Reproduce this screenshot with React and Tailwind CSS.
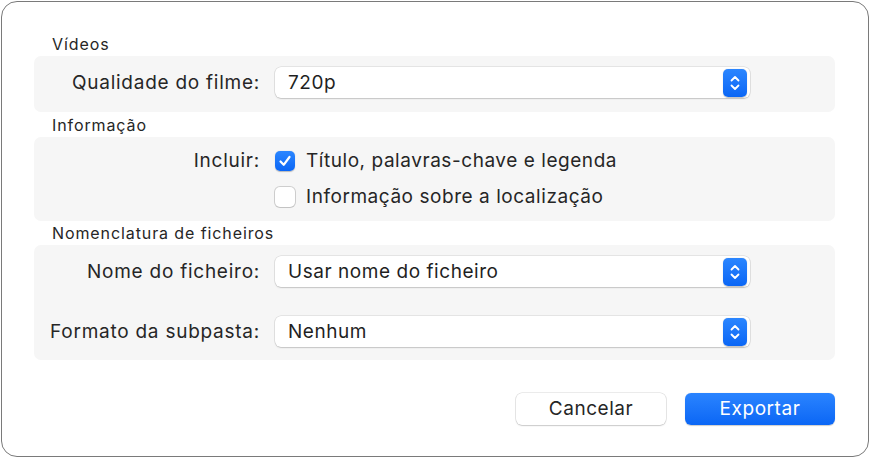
import React, { useState } from 'react';

const Stepper = () => (
  <span className="flex h-[28px] w-[24px] items-center justify-center rounded-[5px] bg-gradient-to-b from-[#2b86ff] to-[#0a66f5] shadow-[0_0.5px_1px_rgba(0,0,0,0.25)]">
    <svg width="12" height="20" viewBox="0 0 12 20" fill="none">
      <path d="M2.5 7.5 L6 4 L9.5 7.5" stroke="white" strokeWidth="1.8" strokeLinecap="round" strokeLinejoin="round" />
      <path d="M2.5 12.5 L6 16 L9.5 12.5" stroke="white" strokeWidth="1.8" strokeLinecap="round" strokeLinejoin="round" />
    </svg>
  </span>
);

const Select = ({ value }) => (
  <div className="flex h-[31px] w-[475px] items-center justify-between rounded-[6px] bg-white pl-[13px] pr-[3px] shadow-[0_0_0_0.5px_rgba(0,0,0,0.14),0_1px_1.5px_rgba(0,0,0,0.14)]">
    <span className="text-[19px] tracking-[0.55px] text-[#1f1f1f]">{value}</span>
    <Stepper />
  </div>
);

const Checkbox = ({ checked, onClick }) =>
  checked ? (
    <button
      onClick={onClick}
      className="flex h-[20px] w-[20px] items-center justify-center rounded-[5px] bg-gradient-to-b from-[#2b86ff] to-[#0a66f5] shadow-[0_0.5px_1px_rgba(0,0,0,0.25)]">
      <svg width="14" height="14" viewBox="0 0 14 14" fill="none">
        <path d="M2.5 7.5 L5.7 10.8 L11.5 3" stroke="white" strokeWidth="2.2" strokeLinecap="round" strokeLinejoin="round" />
      </svg>
    </button>
  ) : (
    <button
      onClick={onClick}
      className="h-[20px] w-[20px] rounded-[5px] bg-white shadow-[0_0_0_1px_rgba(0,0,0,0.16),0_1px_1px_rgba(0,0,0,0.06)]"
    />
  );

const Row = ({ label, children }) => (
  <div className="flex items-center leading-[24px]">
    <div className="w-[226px] text-right text-[19px] tracking-[0.75px] text-[#262626]">{label}</div>
    <div className="ml-[15px]">{children}</div>
  </div>
);

const SectionTitle = ({ children }) => (
  <div className="h-[24px] pl-[18px] text-[16px] leading-[24px] tracking-[0.9px] text-[#262626]">{children}</div>
);

const App = () => {
  const [titulo, setTitulo] = useState(true);
  const [local, setLocal] = useState(false);

  return (
    <div className="h-[458px] w-[870px] bg-white p-[1px] font-['Inter',sans-serif]">
      <div className="h-[456px] w-[868px] rounded-[16px] border-[1.5px] border-[#7a7a7a] bg-white px-[32px] pt-[30px]">
        <SectionTitle>Vídeos</SectionTitle>
        <div className="h-[56px] w-[801px] rounded-[7px] bg-[#f6f6f6] pt-[11px]">
          <Row label="Qualidade do filme:">
            <Select value="720p" />
          </Row>
        </div>

        <div className="pt-[1px]">
          <SectionTitle>Informação</SectionTitle>
        </div>
        <div className="flex h-[84px] w-[801px] flex-col gap-[12px] rounded-[7px] bg-[#f6f6f6] pt-[12px]">
          <Row label="Incluir:">
            <div className="flex items-center gap-[11px]">
              <Checkbox checked={titulo} onClick={() => setTitulo(!titulo)} />
              <span className="text-[19px] tracking-[0.55px] text-[#262626]">Título, palavras-chave e legenda</span>
            </div>
          </Row>
          <Row label="">
            <div className="flex items-center gap-[11px]">
              <Checkbox checked={local} onClick={() => setLocal(!local)} />
              <span className="text-[19px] tracking-[0.55px] text-[#262626]">Informação sobre a localização</span>
            </div>
          </Row>
        </div>

        <SectionTitle>Nomenclatura de ficheiros</SectionTitle>
        <div className="flex h-[115px] w-[801px] flex-col gap-[29px] rounded-[7px] bg-[#f6f6f6] pt-[11px]">
          <Row label="Nome do ficheiro:">
            <Select value="Usar nome do ficheiro" />
          </Row>
          <Row label="Formato da subpasta:">
            <Select value="Nenhum" />
          </Row>
        </div>

        <div className="mt-[33px] flex w-[801px] justify-end gap-[19px]">
          <button className="h-[32px] w-[150px] rounded-[6px] bg-white text-[19px] tracking-[0.55px] text-[#262626] shadow-[0_0_0_0.5px_rgba(0,0,0,0.16),0_1px_1.5px_rgba(0,0,0,0.14)]">
            Cancelar
          </button>
          <button className="h-[32px] w-[150px] rounded-[6px] bg-gradient-to-b from-[#2a84ff] to-[#0a66f5] text-[19px] tracking-[0.55px] text-white shadow-[0_0.5px_1px_rgba(0,0,0,0.2)]">
            Exportar
          </button>
        </div>
      </div>
    </div>
  );
};

export default App;
